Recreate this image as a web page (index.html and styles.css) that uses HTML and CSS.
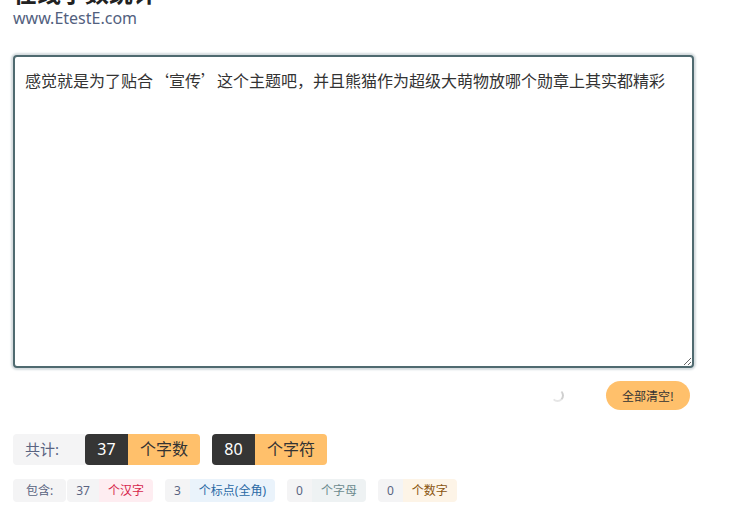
FILE: index.html
```html
<!DOCTYPE html>
<html lang="zh-CN">
<head>
  <meta charset="UTF-8" />
  <title>在线字数统计</title>
  <link rel="stylesheet" href="styles.css">
</head>
<body>
  <div class="wrap">
    <header class="head">
      <h1>在线字数统计</h1>
      <p class="site">www.EtestE.com</p>
    </header>

    <textarea class="input">感觉就是为了贴合‘宣传’这个主题吧，并且熊猫作为超级大萌物放哪个勋章上其实都精彩</textarea>

    <div class="actions">
      <span class="spinner"></span>
      <button class="clear">全部清空!</button>
    </div>

    <div class="total">
      <span class="lbl">共计:</span>
      <span class="grp">
        <span class="num">37</span><span class="unit">个字数</span>
      </span>
      <span class="grp">
        <span class="num">80</span><span class="unit">个字符</span>
      </span>
    </div>

    <div class="detail">
      <span class="tag"><span class="k">包含:</span><span class="k n">37</span><span class="v han">个汉字</span></span>
      <span class="tag"><span class="k n">3</span><span class="v punc">个标点(全角)</span></span>
      <span class="tag"><span class="k n">0</span><span class="v alpha">个字母</span></span>
      <span class="tag"><span class="k n">0</span><span class="v digit">个数字</span></span>
    </div>
  </div>
</body>
</html>
```

FILE: styles.css
```css
body {
  margin: 0;
  font-family: "Noto Sans", "Noto Sans CJK SC", sans-serif;
  color: #333;
  background: #fff;
}

.wrap {
  width: 681px;
  padding-left: 13px;
}

.head h1 {
  margin: -20px 0 0;
  font-size: 24px;
  line-height: 26px;
  font-weight: bold;
  color: #222;
}

.site {
  margin: 2px 0 0;
  font-size: 16px;
  line-height: 20px;
  color: #52607e;
}

.input {
  display: block;
  box-sizing: border-box;
  width: 681px;
  height: 313px;
  margin-top: 27px;
  padding: 12px 10px;
  border: 2px solid #4f6a70;
  border-radius: 4px;
  box-shadow: 0 0 2px 2px #d5dcdf;
  font-family: "Noto Sans CJK SC", sans-serif;
  font-size: 16px;
  line-height: 22px;
  color: #333;
  outline: none;
  resize: vertical;
}

.actions {
  display: flex;
  justify-content: flex-end;
  align-items: center;
  gap: 42px;
  margin-top: 13px;
  padding-right: 4px;
}

.spinner {
  width: 9px;
  height: 9px;
  border: 2px solid transparent;
  border-right-color: #cfcfcf;
  border-bottom-color: #e6e6e6;
  border-radius: 50%;
}

.clear {
  height: 29px;
  padding: 0 16px;
  border: 0;
  border-radius: 15px;
  background: #ffc06b;
  color: #333;
  font-family: "Noto Sans CJK SC", sans-serif;
  font-size: 12px;
}

.total {
  display: flex;
  gap: 12px;
  margin-top: 24px;
}

.total .lbl {
  margin-right: -12px;
  width: 72px;
  height: 31px;
  line-height: 31px;
  padding-left: 12px;
  box-sizing: border-box;
  background: #f4f4f5;
  border-radius: 4px 0 0 4px;
  color: #5a6482;
  font-size: 15px;
}

.grp {
  display: flex;
  height: 31px;
  line-height: 31px;
  border-radius: 4px;
  overflow: hidden;
  font-size: 16px;
}

.grp .num {
  width: 43px;
  text-align: center;
  background: #353535;
  color: #fff;
}

.grp .unit {
  width: 72px;
  text-align: center;
  background: #ffc06b;
  color: #333;
}

.detail {
  display: flex;
  gap: 12px;
  margin-top: 14px;
  font-size: 12px;
}

.tag {
  display: flex;
  height: 23px;
  line-height: 23px;
}

.tag .k {
  background: #f4f4f5;
  color: #5a6482;
  padding: 0 13px;
  border-radius: 4px;
}

.tag .n {
  padding: 0 9px;
  border-radius: 4px 0 0 4px;
}

.tag .k + .n {
  margin-left: 1px;
  padding: 0 9px;
}

.tag .v {
  padding: 0 9px;
  border-radius: 0 4px 4px 0;
}

.han { background: #feedf1; color: #d61f4b; }
.punc { background: #eaf3fb; color: #2a6aa5; }
.alpha { background: #eef2f3; color: #6b8a8e; }
.digit { background: #fdf4e7; color: #8a5410; }
```
